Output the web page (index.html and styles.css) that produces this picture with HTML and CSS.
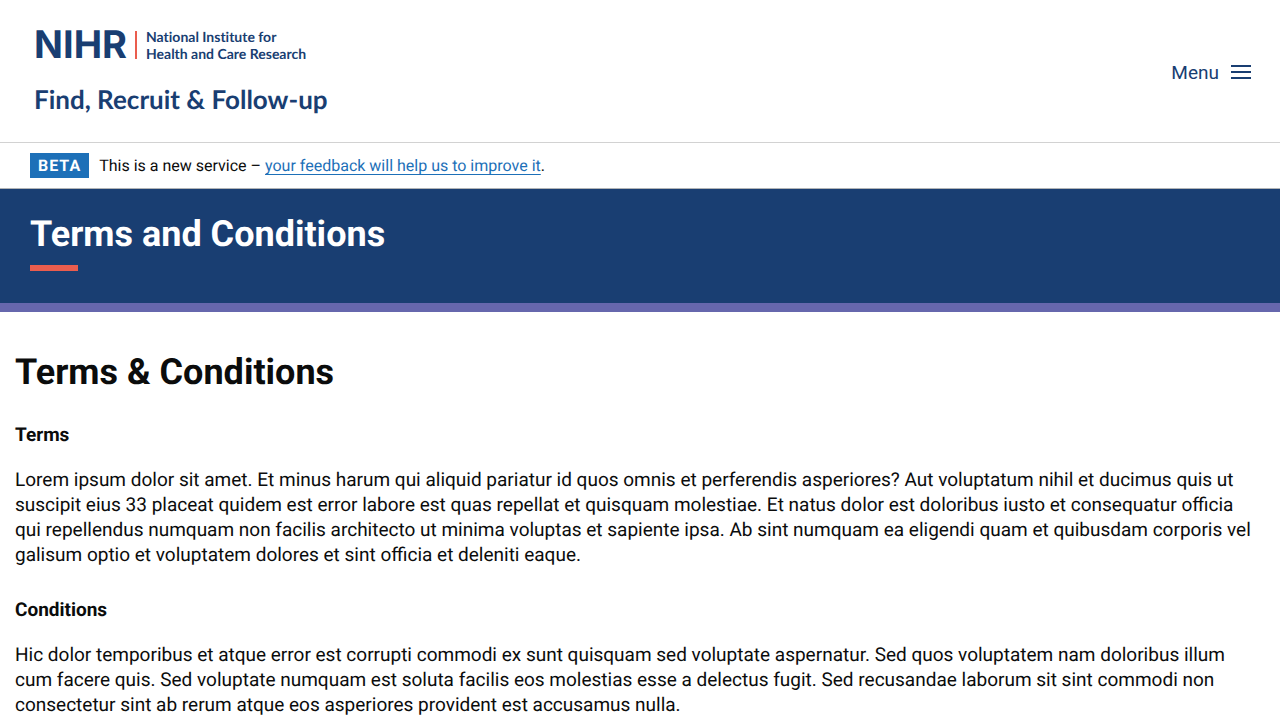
FILE: index.html
```html
<!DOCTYPE html>
<html lang="en">
<head>
<meta charset="utf-8">
<meta name="viewport" content="width=device-width, initial-scale=1">
<title>Terms and Conditions</title>
<link rel="stylesheet" href="styles.css">
</head>
<body>
<header class="header">
  <a class="brand" href="#">
    <span class="brand-top">
      <span class="brand-mark">NIHR</span>
      <span class="brand-rule"></span>
      <span class="brand-name">National Institute for<br>Health and Care Research</span>
    </span>
    <span class="brand-service">Find, Recruit &amp; Follow-up</span>
  </a>
  <button class="menu" type="button">Menu
    <svg class="menu-icon" viewBox="0 0 20 14" aria-hidden="true"><path d="M0 1h20M0 7h20M0 13h20"/></svg>
  </button>
</header>
<div class="phase">
  <strong class="tag">BETA</strong>
  <span>This is a new service – <a class="link" href="#">your feedback will help us to improve it</a>.</span>
</div>
<div class="banner">
  <h1 class="banner-title">Terms and Conditions</h1>
</div>
<main class="content">
  <h2 class="title">Terms &amp; Conditions</h2>
  <h3 class="subtitle">Terms</h3>
  <p class="text">Lorem ipsum dolor sit amet. Et minus harum qui aliquid pariatur id quos omnis et perferendis asperiores? Aut voluptatum nihil et ducimus quis ut suscipit eius 33 placeat quidem est error labore est quas repellat et quisquam molestiae. Et natus dolor est doloribus iusto et consequatur officia qui repellendus numquam non facilis architecto ut minima voluptas et sapiente ipsa. Ab sint numquam ea eligendi quam et quibusdam corporis vel galisum optio et voluptatem dolores et sint officia et deleniti eaque.</p>
  <h3 class="subtitle">Conditions</h3>
  <p class="text">Hic dolor temporibus et atque error est corrupti commodi ex sunt quisquam sed voluptate aspernatur. Sed quos voluptatem nam doloribus illum cum facere quis. Sed voluptate numquam est soluta facilis eos molestias esse a delectus fugit. Sed recusandae laborum sit sint commodi non consectetur sint ab rerum atque eos asperiores provident est accusamus nulla.</p>
</main>
</body>
</html>
```
FILE: styles.css
```css
* { box-sizing: border-box; }
body {
  margin: 0;
  background: #fff;
  color: #0b0c0c;
  font-family: Roboto, Arial, sans-serif;
  font-size: 19px;
  line-height: 25px;
  text-rendering: geometricPrecision;
}
.header {
  display: flex;
  justify-content: space-between;
  align-items: center;
  padding: 28px 29px 26px 34px;
  border-bottom: 1px solid #d2d2d2;
}
.brand {
  display: flex;
  flex-direction: column;
  gap: 20px;
  color: #193e72;
  font-family: Lato, sans-serif;
  font-weight: 700;
  font-variant-ligatures: none;
  text-decoration: none;
}
.brand-top { display: flex; align-items: center; }
.brand-mark {
  padding-right: 8px;
  font-family: Inter, sans-serif;
  font-size: 38px;
  font-weight: 700;
  line-height: 34px;
}
.brand-rule {
  width: 2px;
  height: 28px;
  background: #ea5d4e;
}
.brand-name {
  padding-left: 9px;
  font-size: 14px;
  line-height: 17px;
}
.brand-service { font-size: 26px; line-height: 34px; }
.menu {
  display: flex;
  align-items: center;
  gap: 12px;
  padding: 0;
  border: 0;
  background: none;
  color: #193e72;
  font: inherit;
  cursor: pointer;
}
.menu-icon {
  width: 20px;
  height: 14px;
  fill: none;
  stroke: currentColor;
  stroke-width: 2;
}
.phase {
  display: flex;
  align-items: center;
  gap: 10px;
  padding: 10px 30px;
  border-bottom: 1px solid #b1b4b6;
  font-size: 16px;
}
.tag {
  padding: 0 8px;
  background: #1d70b8;
  color: #fff;
  letter-spacing: 1px;
}
.link {
  color: #1d70b8;
  text-decoration-thickness: 1px;
  text-underline-offset: 3px;
}
.banner {
  padding: 20px 30px 32px;
  border-bottom: 9px solid #6667ad;
  background: #193e72;
  color: #fff;
}
.banner-title {
  margin: 0;
  font-size: 36px;
  line-height: 50px;
}
.banner-title::after {
  content: "";
  display: block;
  width: 48px;
  height: 6px;
  margin-top: 6px;
  background: #ea5d4e;
}
.content { padding: 40px 20px 40px 15px; }
.title { margin: 0 0 30px; font-size: 36px; line-height: 40px; }
.subtitle { margin: 0 0 20px; font-size: 19px; }
.text { margin: 0 0 30px; }
```
